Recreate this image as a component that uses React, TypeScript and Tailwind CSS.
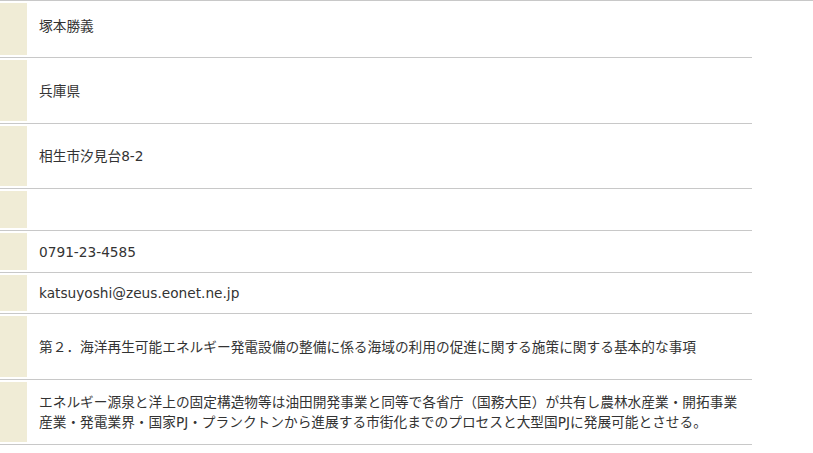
const rows: { h: string; text: React.ReactNode; extra?: string }[] = [
  { h: "h-[57px]", text: "塚本勝義", extra: "pb-[7px]" },
  { h: "h-[66px]", text: "兵庫県" },
  { h: "h-[65px]", text: "相生市汐見台8-2" },
  { h: "h-[42px]", text: "" },
  { h: "h-[42px]", text: "0791-23-4585" },
  { h: "h-[41px]", text: "katsuyoshi@zeus.eonet.ne.jp" },
  {
    h: "h-[66px]",
    text: "第２．海洋再生可能エネルギー発電設備の整備に係る海域の利用の促進に関する施策に関する基本的な事項",
  },
  {
    h: "h-[65px]",
    text: (
      <>
        エネルギー源泉と洋上の固定構造物等は油田開発事業と同等で各省庁（国務大臣）が共有し農林水産業・開拓事業
        <br />
        産業・発電業界・国家PJ・プランクトンから進展する市街化までのプロセスと大型国PJに発展可能とさせる。
      </>
    ),
  },
];

export default function App() {
  return (
    <div
      className="w-[813px] h-[453px] bg-white overflow-hidden text-[#333] text-[13.7px] leading-[20px]"
      style={{ fontFamily: '"DejaVu Sans", "Noto Sans CJK JP", sans-serif' }}
    >
      <div className="border-t border-[#c8c8c8]" />
      <div className="w-[752px]">
        {rows.map((r, i) => (
          <div key={i} className={`flex border-b border-[#c8c8c8] ${r.h}`}>
            <div className="w-[27px] shrink-0 my-[2px] bg-[#f0ecd6]" />
            <div className={`flex items-center pl-[12px] whitespace-nowrap ${r.extra ?? ""}`}>
              <div>{r.text}</div>
            </div>
          </div>
        ))}
      </div>
    </div>
  );
}
